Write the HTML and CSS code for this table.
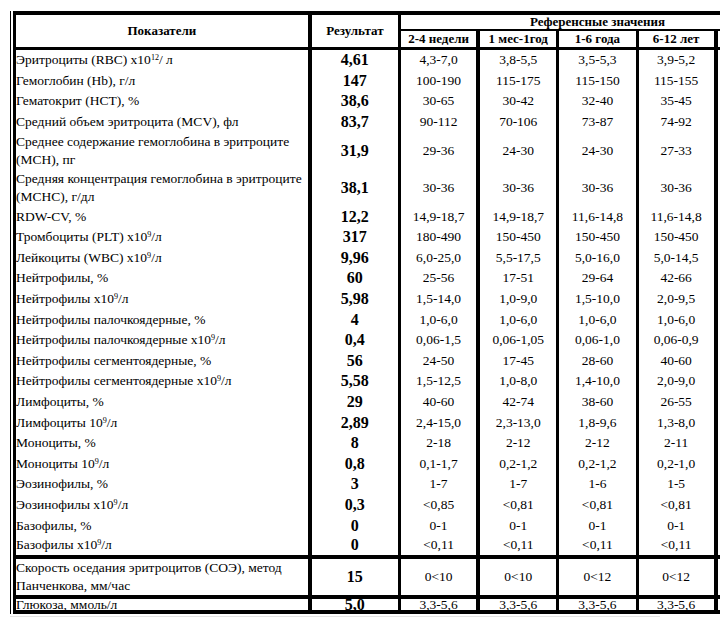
FILE: index.html
```html
<!DOCTYPE html>
<html lang="ru">
<head>
<meta charset="utf-8">
<title>Показатели</title>
<link rel="stylesheet" href="styles.css">
</head>
<body>
<div class="page">
  <div class="frame">
    <table class="report">
      <colgroup>
        <col class="c-name"><col class="c-res"><col class="c-ref c-ref-a"><col class="c-ref c-ref-b"><col class="c-ref c-ref-b"><col class="c-ref c-ref-a"><col class="c-ref c-ref-b">
      </colgroup>
      <thead>
        <tr class="h1">
          <th rowspan="2" class="b4 hb">Показатели</th>
          <th rowspan="2" class="hb">Результат</th>
          <th colspan="5" class="refhead">Референсные значения</th>
        </tr>
        <tr class="h2">
          <th class="b4 hb">2-4 недели</th>
          <th class="hb">1 мес-1год</th>
          <th class="hb">1-6 года</th>
          <th class="b4 hb">6-12 лет</th>
          <th class="hb"></th>
        </tr>
      </thead>
      <tbody>
        <tr><td class="name">Эритроциты (RBC) x10<sup>12</sup>/ л</td><td class="val">4,61</td><td>4,3-7,0</td><td>3,8-5,5</td><td>3,5-5,3</td><td>3,9-5,2</td><td></td></tr>
        <tr><td class="name">Гемоглобин (Hb), г/л</td><td class="val">147</td><td>100-190</td><td>115-175</td><td>115-150</td><td>115-155</td><td></td></tr>
        <tr><td class="name">Гематокрит (HCT), %</td><td class="val">38,6</td><td>30-65</td><td>30-42</td><td>32-40</td><td>35-45</td><td></td></tr>
        <tr><td class="name">Средний объем эритроцита (MCV), фл</td><td class="val">83,7</td><td>90-112</td><td>70-106</td><td>73-87</td><td>74-92</td><td></td></tr>
        <tr class="double"><td class="name">Среднее содержание гемоглобина в эритроците (MCH), пг</td><td class="val">31,9</td><td>29-36</td><td>24-30</td><td>24-30</td><td>27-33</td><td></td></tr>
        <tr class="double"><td class="name">Средняя концентрация гемоглобина в эритроците (MCHC), г/дл</td><td class="val">38,1</td><td>30-36</td><td>30-36</td><td>30-36</td><td>30-36</td><td></td></tr>
        <tr><td class="name">RDW-CV, %</td><td class="val">12,2</td><td>14,9-18,7</td><td>14,9-18,7</td><td>11,6-14,8</td><td>11,6-14,8</td><td></td></tr>
        <tr><td class="name">Тромбоциты (PLT) x10<sup>9</sup>/л</td><td class="val">317</td><td>180-490</td><td>150-450</td><td>150-450</td><td>150-450</td><td></td></tr>
        <tr><td class="name">Лейкоциты (WBC) x10<sup>9</sup>/л</td><td class="val">9,96</td><td>6,0-25,0</td><td>5,5-17,5</td><td>5,0-16,0</td><td>5,0-14,5</td><td></td></tr>
        <tr><td class="name">Нейтрофилы, %</td><td class="val">60</td><td>25-56</td><td>17-51</td><td>29-64</td><td>42-66</td><td></td></tr>
        <tr><td class="name">Нейтрофилы x10<sup>9</sup>/л</td><td class="val">5,98</td><td>1,5-14,0</td><td>1,0-9,0</td><td>1,5-10,0</td><td>2,0-9,5</td><td></td></tr>
        <tr><td class="name">Нейтрофилы палочкоядерные, %</td><td class="val">4</td><td>1,0-6,0</td><td>1,0-6,0</td><td>1,0-6,0</td><td>1,0-6,0</td><td></td></tr>
        <tr><td class="name">Нейтрофилы палочкоядерные x10<sup>9</sup>/л</td><td class="val">0,4</td><td>0,06-1,5</td><td>0,06-1,05</td><td>0,06-1,0</td><td>0,06-0,9</td><td></td></tr>
        <tr><td class="name">Нейтрофилы сегментоядерные, %</td><td class="val">56</td><td>24-50</td><td>17-45</td><td>28-60</td><td>40-60</td><td></td></tr>
        <tr><td class="name">Нейтрофилы сегментоядерные x10<sup>9</sup>/л</td><td class="val">5,58</td><td>1,5-12,5</td><td>1,0-8,0</td><td>1,4-10,0</td><td>2,0-9,0</td><td></td></tr>
        <tr><td class="name">Лимфоциты, %</td><td class="val">29</td><td>40-60</td><td>42-74</td><td>38-60</td><td>26-55</td><td></td></tr>
        <tr><td class="name">Лимфоциты 10<sup>9</sup>/л</td><td class="val">2,89</td><td>2,4-15,0</td><td>2,3-13,0</td><td>1,8-9,6</td><td>1,3-8,0</td><td></td></tr>
        <tr><td class="name">Моноциты, %</td><td class="val">8</td><td>2-18</td><td>2-12</td><td>2-12</td><td>2-11</td><td></td></tr>
        <tr><td class="name">Моноциты 10<sup>9</sup>/л</td><td class="val">0,8</td><td>0,1-1,7</td><td>0,2-1,2</td><td>0,2-1,2</td><td>0,2-1,0</td><td></td></tr>
        <tr><td class="name">Эозинофилы, %</td><td class="val">3</td><td>1-7</td><td>1-7</td><td>1-6</td><td>1-5</td><td></td></tr>
        <tr><td class="name">Эозинофилы x10<sup>9</sup>/л</td><td class="val">0,3</td><td>&lt;0,85</td><td>&lt;0,81</td><td>&lt;0,81</td><td>&lt;0,81</td><td></td></tr>
        <tr><td class="name">Базофилы, %</td><td class="val">0</td><td>0-1</td><td>0-1</td><td>0-1</td><td>0-1</td><td></td></tr>
        <tr class="group-end last-single"><td class="name">Базофилы x10<sup>9</sup>/л</td><td class="val">0</td><td>&lt;0,11</td><td>&lt;0,11</td><td>&lt;0,11</td><td>&lt;0,11</td><td></td></tr>
        <tr class="group-end esr"><td class="name">Скорость оседания эритроцитов (СОЭ), метод Панченкова, мм/час</td><td class="val">15</td><td>0&lt;10</td><td>0&lt;10</td><td>0&lt;12</td><td>0&lt;12</td><td></td></tr>
        <tr class="group-end glucose"><td class="name">Глюкоза, ммоль/л</td><td class="val">5,0</td><td>3,3-5,6</td><td>3,3-5,6</td><td>3,3-5,6</td><td>3,3-5,6</td><td></td></tr>
      </tbody>
    </table>
  </div>
  <div class="shadow-line"></div>
</div>
</body>
</html>
```

FILE: styles.css
```css
html, body {
  margin: 0;
  padding: 0;
  background: #fff;
}

body {
  font-family: "Liberation Serif", "Times New Roman", serif;
  color: #000;
  width: 720px;
  height: 624px;
  overflow: hidden;
}

.page {
  width: 720px;
  height: 624px;
  box-sizing: border-box;
  padding: 11px 0 0 10px;
  overflow: hidden;
}

.frame {
  border-left: 1px solid #000;
  padding-left: 2px;
  width: max-content;
}

.report {
  border-collapse: separate;
  border-spacing: 0;
  table-layout: fixed;
  width: 784px;
  border-left: 3px solid #000;
  border-top: 4px solid #000;
}

.c-name { width: 295px; }
.c-res { width: 89px; }
.c-ref-a { width: 79px; }
.c-ref-b { width: 79px; }

.report th,
.report td {
  box-sizing: border-box;
  padding: 0;
  border-right: 3px solid #000;
  vertical-align: middle;
  text-align: center;
  font-size: 13.5px;
  line-height: 16px;
  white-space: nowrap;
}

.report th.b4 { border-right-width: 4px; }
.report tr td:first-child { border-right-width: 4px; }
.report tr td:nth-child(3),
.report tr td:nth-child(6) { border-right-width: 4px; }

.report th {
  font-weight: bold;
  font-size: 13px;
}

.h1 { height: 16px; }
.h1 .refhead {
  border-bottom: 2px solid #000;
  line-height: 14px;
}
.h2 { height: 19px; }
.report .hb { border-bottom: 3px solid #000; }
.h2 th { line-height: 16px; }

.report tbody tr { height: 20.6px; }
.report tbody tr.double { height: 37px; }

.report td.name {
  text-align: left;
  white-space: normal;
  padding-left: 0;
  line-height: 18px;
}

.report td.val {
  font-weight: bold;
  font-size: 16px;
}

.report tr.group-end td { border-bottom: 4px solid #000; }
.report tbody tr.last-single { height: 23px; }
.report tbody tr.esr { height: 37px; }
.report tbody tr.glucose { height: 15px; }
.report tr.glucose td {
  line-height: 11px;
  vertical-align: bottom;
}

sup {
  font-size: 0.6em;
  line-height: 0;
  vertical-align: 0.5em;
}

.shadow-line {
  margin-top: 2px;
  width: 650px;
  border-top: 1px solid #e4e4e4;
}
```
